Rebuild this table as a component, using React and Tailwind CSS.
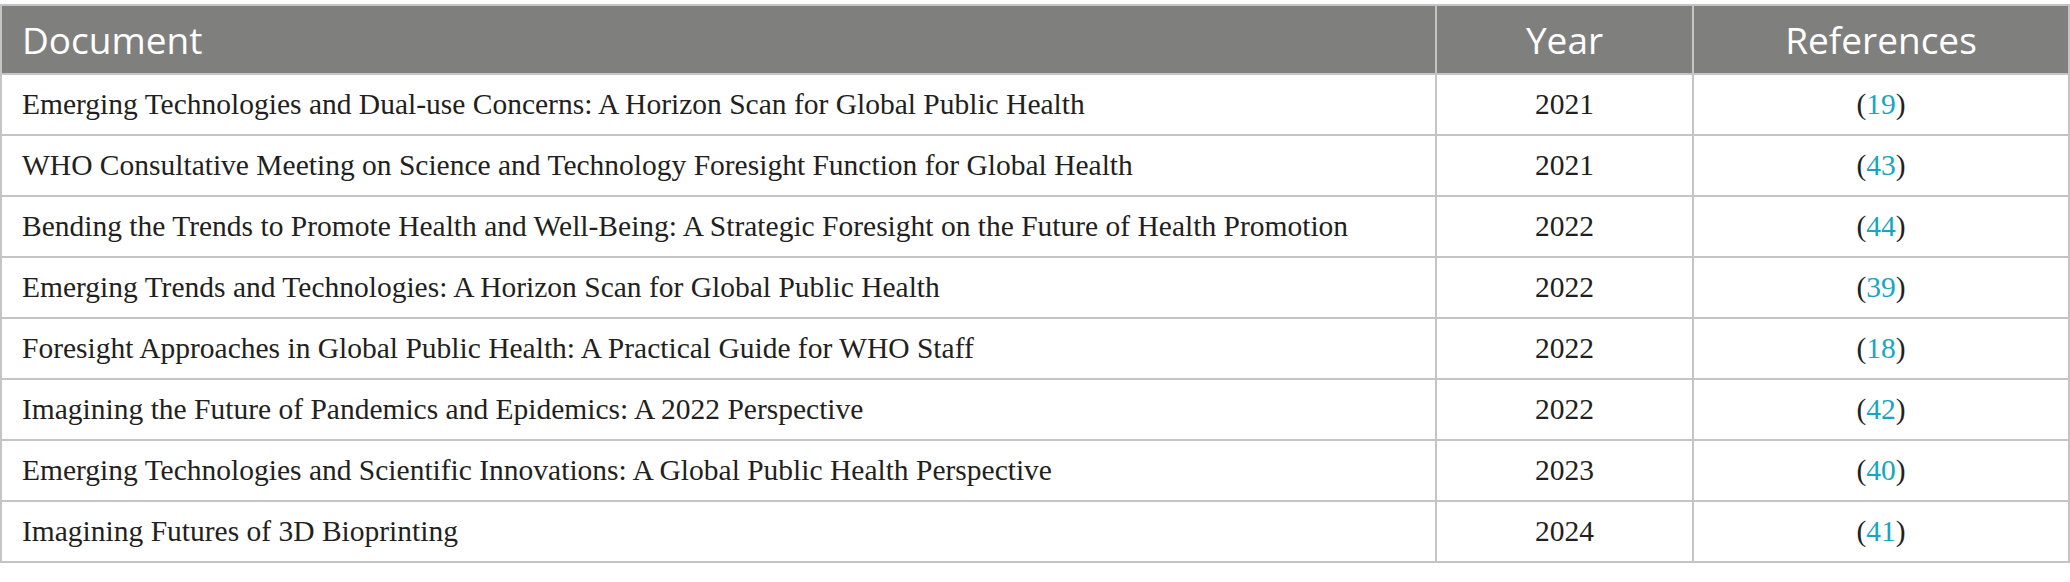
import React from 'react';

const rows = [
  ['Emerging Technologies and Dual-use Concerns: A Horizon Scan for Global Public Health', '2021', '19'],
  ['WHO Consultative Meeting on Science and Technology Foresight Function for Global Health', '2021', '43'],
  ['Bending the Trends to Promote Health and Well-Being: A Strategic Foresight on the Future of Health Promotion', '2022', '44'],
  ['Emerging Trends and Technologies: A Horizon Scan for Global Public Health', '2022', '39'],
  ['Foresight Approaches in Global Public Health: A Practical Guide for WHO Staff', '2022', '18'],
  ['Imagining the Future of Pandemics and Epidemics: A 2022 Perspective', '2022', '42'],
  ['Emerging Technologies and Scientific Innovations: A Global Public Health Perspective', '2023', '40'],
  ['Imagining Futures of 3D Bioprinting', '2024', '41'],
];

export default function App() {
  return (
    <div className="w-[2070px] bg-white pt-[4px]">
      <table className="w-full border-collapse table-fixed">
        <colgroup>
          <col className="w-[1435px]" />
          <col className="w-[257px]" />
          <col />
        </colgroup>
        <thead>
          <tr className="h-[69px] bg-[#7f807e] text-white text-[37px] font-['Open_Sans',sans-serif]">
            <th className="border-2 border-[#c4c4c4] px-[20px] text-left font-normal">Document</th>
            <th className="border-2 border-[#c4c4c4] text-center font-normal">Year</th>
            <th className="border-2 border-[#c4c4c4] text-center font-normal">References</th>
          </tr>
        </thead>
        <tbody className="font-['Liberation_Serif',serif] text-[29.5px] text-[#231f20]">
          {rows.map(([doc, year, ref]) => (
            <tr key={doc} className="h-[61px]">
              <td className="border-2 border-[#c4c4c4] px-[20px] whitespace-nowrap">{doc}</td>
              <td className="border-2 border-[#c4c4c4] text-center">{year}</td>
              <td className="border-2 border-[#c4c4c4] text-center">
                (<span className="text-[#17a6c2]">{ref}</span>)
              </td>
            </tr>
          ))}
        </tbody>
      </table>
    </div>
  );
}
